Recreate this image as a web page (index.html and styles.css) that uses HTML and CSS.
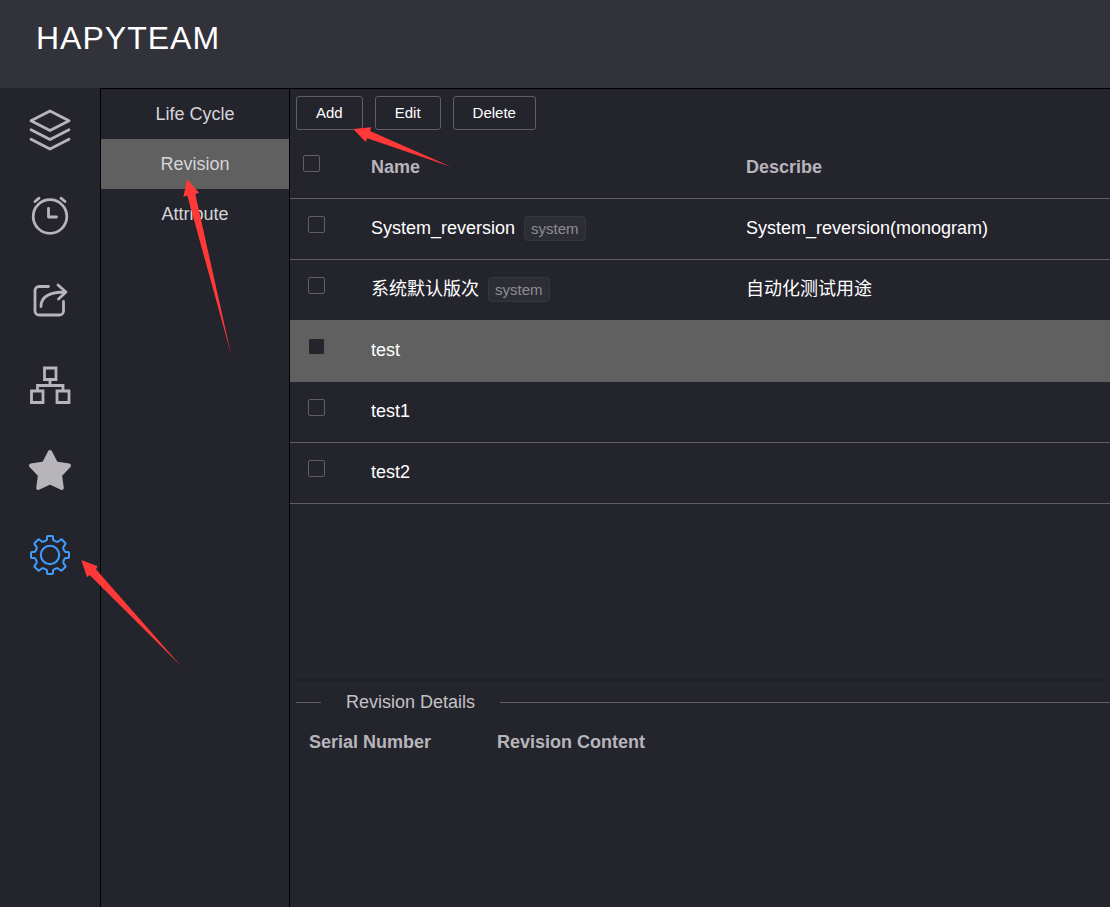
FILE: index.html
```html
<!DOCTYPE html>
<html lang="en">
<head>
<meta charset="utf-8">
<title>Hapyteam</title>
<link rel="stylesheet" href="styles.css">
</head>
<body>
<div class="app">
  <header class="topbar"><h1 class="logo">HAPYTEAM</h1></header>
  <div class="workspace">
    <nav class="rail" aria-label="Main">
      <a class="rail-link" href="#" aria-label="Library">
        <svg class="icon" viewBox="0 0 44 44"><path d="M22 3 41 12.8 22 22.500 3 12.800ZM3 21.800 22 31.500 41 21.800M3 31.200 22 41 41 31.200"/></svg>
      </a>
      <a class="rail-link" href="#" aria-label="Schedule">
        <svg class="icon" viewBox="0 0 44 44"><circle cx="22" cy="23.500" r="16.800"/><path d="M20.500 15.500V24H28.500M7 8.500 11 5.200M33 5.200 37 8.500"/></svg>
      </a>
      <a class="rail-link" href="#" aria-label="Share">
        <svg class="icon" viewBox="0 0 44 44"><path d="M20.500 8.500H11a4 4 0 0 0-4 4V33a4 4 0 0 0 4 4H31.500a4 4 0 0 0 4-4V23.500M13 28.500C13 19 20 14 37.500 14M30 7 38 14 30.500 21"/></svg>
      </a>
      <a class="rail-link" href="#" aria-label="Organization">
        <svg class="icon" viewBox="0 0 44 44"><path class="square" d="M16.500 5H28V16.500H16.500ZM3.500 28H15V39.500H3.500ZM29 28H41V39.500H29ZM22 17V22.500M9.500 28V22.500H35V28"/></svg>
      </a>
      <a class="rail-link" href="#" aria-label="Favorites">
        <svg class="icon" viewBox="0 0 44 44"><path class="star" d="M22 4 28 15.500 41 17.500 32 27 33.800 40 22 34.500 10.200 40 12 27 3 17.500 16 15.500Z"/></svg>
      </a>
      <a class="rail-link rail-link-active" href="#" aria-label="Settings" aria-current="page">
        <svg class="icon" viewBox="-22 -22 44 44"><circle r="9.200"/><path d="M-3-18Q-3-19-2-19H2Q3-19 3-18V-16Q3-14.700 4.500-14.200L6.500-13.300Q7.600-12.900 8.600-13.800L10.600-15.300Q11.300-16 12-15.300L15.300-12Q16-11.300 15.300-10.600L13.800-8.600Q12.900-7.600 13.300-6.500L14.200-4.500Q14.700-3 16-3H18Q19-3 19-2V2Q19 3 18 3H16Q14.700 3 14.200 4.500L13.300 6.500Q12.900 7.600 13.800 8.600L15.300 10.600Q16 11.300 15.300 12L12 15.300Q11.300 16 10.600 15.300L8.600 13.800Q7.600 12.900 6.500 13.300L4.500 14.200Q3 14.700 3 16V18Q3 19 2 19H-2Q-3 19-3 18V16Q-3 14.700-4.500 14.200L-6.500 13.300Q-7.600 12.900-8.600 13.800L-10.600 15.300Q-11.300 16-12 15.300L-15.300 12Q-16 11.300-15.300 10.600L-13.800 8.600Q-12.900 7.600-13.300 6.500L-14.200 4.500Q-14.700 3-16 3H-18Q-19 3-19 2V-2Q-19-3-18-3H-16Q-14.700-3-14.200-4.500L-13.300-6.500Q-12.900-7.600-13.800-8.600L-15.300-10.600Q-16-11.300-15.300-12L-12-15.300Q-11.300-16-10.600-15.300L-8.600-13.800Q-7.600-12.900-6.500-13.300L-4.500-14.200Q-3-14.700-3-16Z"/></svg>
      </a>
    </nav>
    <nav class="submenu" aria-label="Settings">
      <a class="submenu-link" href="#">Life Cycle</a>
      <a class="submenu-link submenu-link-active" href="#" aria-current="page">Revision</a>
      <a class="submenu-link" href="#">Attribute</a>
    </nav>
    <main class="content">
      <section class="list">
        <div class="toolbar">
          <button class="button" type="button">Add</button>
          <button class="button" type="button">Edit</button>
          <button class="button" type="button">Delete</button>
        </div>
        <table class="revisions">
          <thead>
            <tr>
              <th class="check-col"><input class="check" type="checkbox" aria-label="Select all"></th>
              <th>Name</th>
              <th>Describe</th>
            </tr>
          </thead>
          <tbody>
            <tr>
              <td class="check-col"><input class="check" type="checkbox" aria-label="Select System_reversion"></td>
              <td><div class="name">System_reversion<span class="tag">system</span></div></td>
              <td>System_reversion(monogram)</td>
            </tr>
            <tr>
              <td class="check-col"><input class="check" type="checkbox" aria-label="Select 系统默认版次"></td>
              <td><div class="name">系统默认版次<span class="tag">system</span></div></td>
              <td>自动化测试用途</td>
            </tr>
            <tr class="selected">
              <td class="check-col"><input class="check" type="checkbox" aria-label="Select test" checked></td>
              <td>test</td>
              <td></td>
            </tr>
            <tr>
              <td class="check-col"><input class="check" type="checkbox" aria-label="Select test1"></td>
              <td>test1</td>
              <td></td>
            </tr>
            <tr>
              <td class="check-col"><input class="check" type="checkbox" aria-label="Select test2"></td>
              <td>test2</td>
              <td></td>
            </tr>
          </tbody>
        </table>
      </section>
      <section class="details">
        <h2 class="details-title">Revision Details</h2>
        <table class="details-table">
          <thead>
            <tr><th class="serial-col">Serial Number</th><th>Revision Content</th></tr>
          </thead>
        </table>
      </section>
    </main>
  </div>
  <svg class="pointers" width="460" height="680" viewBox="0 0 460 680" aria-hidden="true">
    <path d="M353.300 129 371.300 127.300 370 131 451.500 167 367.300 138.300 365.700 142Z"/>
    <path d="M187.300 179.300 199 192.700 195.300 194 231 354 187.300 195.600 183.300 197Z"/>
    <path d="M81.300 560 97.600 566.300 95.900 569.300 181 666 89.700 575 87 577.300Z"/>
  </svg>
</div>
</body>
</html>
```

FILE: styles.css
```css
* {
  box-sizing: border-box;
}

body {
  margin: 0;
  background: #24242d;
  color: #fff;
  font: 18px/24px "Liberation Sans", Arial, "Noto Sans CJK SC", sans-serif;
}

a {
  color: inherit;
  text-decoration: none;
}

.app {
  position: relative;
  display: flex;
  flex-direction: column;
  min-height: 100vh;
}

.topbar {
  height: 88px;
  padding: 20px 36px;
  background: #32323b;
}

.logo {
  margin: 0;
  font-size: 32px;
  font-weight: 400;
  line-height: 36px;
  letter-spacing: 1px;
}

.workspace {
  display: flex;
  flex: 1;
}

.rail {
  display: flex;
  flex-direction: column;
  flex: 0 0 100px;
}

.rail-link {
  display: flex;
  align-items: center;
  justify-content: center;
  height: 85px;
  padding-bottom: 1px;
  color: #b7b5ba;
}

.rail-link-active {
  color: #409eff;
}

.icon {
  width: 44px;
  height: 44px;
  fill: none;
  stroke: currentColor;
  stroke-width: 2.8;
  stroke-linecap: round;
  stroke-linejoin: round;
}

.rail-link-active .icon {
  stroke-width: 2;
}

.icon .square {
  stroke-linecap: butt;
  stroke-linejoin: miter;
}

.icon .star {
  fill: currentColor;
  stroke-width: 4;
}

.submenu {
  flex: 0 0 190px;
  border: 1px solid #000;
  border-bottom: 0;
  color: #d5d5d7;
}

.submenu-link {
  display: block;
  line-height: 50px;
  text-align: center;
}

.submenu-link-active {
  background: #606060;
}

.content {
  display: flex;
  flex: 1;
  flex-direction: column;
  min-width: 0;
  border-top: 1px solid #000;
}

.list {
  flex: 1;
  border-bottom: 2px solid #1f1f28;
}

.toolbar {
  display: flex;
  gap: 12px;
  padding: 7px 6px 8px;
}

.button {
  height: 34px;
  padding: 0 19px;
  border: 1px solid #606060;
  border-radius: 3px;
  background: transparent;
  color: #fff;
  font: inherit;
  font-size: 15px;
}

.revisions {
  width: 100%;
  border-collapse: separate;
  border-spacing: 0;
  table-layout: fixed;
}

.revisions th,
.revisions td {
  height: 61px;
  padding: 0 11px 3px;
  border-bottom: 1px solid #606060;
  text-align: left;
}

th {
  color: #b7b5ba;
  font-weight: 700;
}

.revisions .check-col {
  width: 70px;
  padding: 17px 0 0 18px;
  line-height: 0;
  vertical-align: top;
}

.revisions th.check-col {
  padding-left: 13px;
}

.check {
  width: 17px;
  height: 17px;
  margin: 0;
  border: 1px solid #606060;
  border-radius: 2px;
  appearance: none;
}

.selected {
  background: #606060;
}

.check:checked {
  background: #24242d;
}

.name {
  display: flex;
  align-items: center;
  gap: 9px;
}

.tag {
  height: 25px;
  margin-top: 2px;
  padding: 0 6px;
  border: 1px solid #373740;
  border-radius: 4px;
  background: #2d2d36;
  color: #8d8d94;
  font-size: 15px;
}

.details {
  height: 226px;
  padding: 9px 0 0 6px;
}

.details-title {
  display: flex;
  align-items: center;
  gap: 25px;
  margin: 0;
  color: #c2c2c4;
  font-size: 18px;
  font-weight: 400;
}

.details-title::before,
.details-title::after {
  flex: 0 0 25px;
  height: 1px;
  background: #606060;
  content: "";
}

.details-title::after {
  flex: 1;
}

.details-table {
  width: 100%;
  margin-top: 16px;
  border-spacing: 0;
}

.details-table th {
  padding: 0 13px;
  text-align: left;
}

.serial-col {
  width: 188px;
}

.pointers {
  position: absolute;
  top: 0;
  left: 0;
  fill: #ff3838;
  pointer-events: none;
}
```
